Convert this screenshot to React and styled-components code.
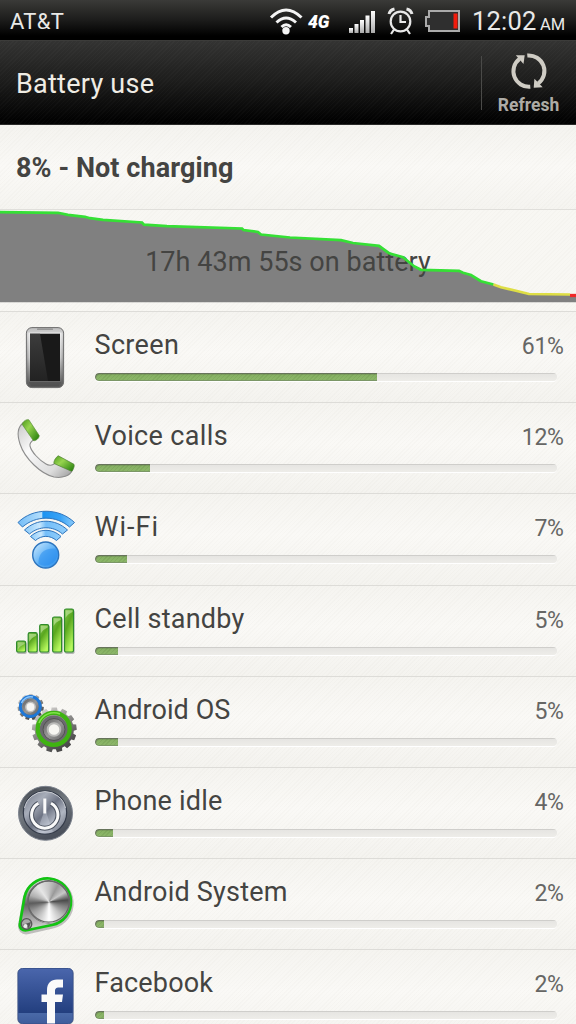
import React from 'react';
import styled, { createGlobalStyle } from 'styled-components';

const Global = createGlobalStyle`
  * { box-sizing: border-box; }
  html, body { margin: 0; padding: 0; background: #f6f5f1; overflow: hidden; }
  body { font-family: Roboto, "Liberation Sans", sans-serif; }
`;

const Screen = styled.main`
  width: 576px;
  height: 1024px;
  overflow: hidden;
  display: flex;
  flex-direction: column;
  background: #f7f6f2;
  color: #444442;
`;

const StatusBar = styled.div`
  flex: none;
  height: 40px;
  display: flex;
  align-items: center;
  padding: 2px 10px 0;
  background: linear-gradient(#3a3a38, #1c1c1b 50%, #000 90%);
  color: #e9e9e7;
`;

const Carrier = styled.span`
  flex: 1;
  padding-top: 2px;
  font-size: 22px;
  line-height: 36px;
  letter-spacing: 0.3px;
`;

const StatusIcons = styled.svg`
  display: block;
  width: 196px;
  height: 38px;
`;

const Clock = styled.span`
  width: 94px;
  margin-left: 8px;
  padding-top: 3px;
  font-size: 25.5px;
  line-height: 35px;
  letter-spacing: 0.2px;
  white-space: nowrap;
`;

const Meridiem = styled.small`
  font-size: 16.5px;
  margin-left: 3.5px;
  letter-spacing: 0;
`;

const TitleBar = styled.header`
  flex: none;
  height: 85px;
  display: flex;
  align-items: center;
  border-top: 1px solid #3c3c3a;
  border-bottom: 1px solid #2a2a29;
  background:
    repeating-linear-gradient(135deg, rgba(255,255,255,0.02) 0 1px, transparent 1px 3px),
    linear-gradient(#333332, #1d1d1c 48%, #020202 95%);
`;

const Title = styled.h1`
  flex: 1;
  margin: 0;
  padding: 2px 0 0 16px;
  font-size: 27px;
  font-weight: 400;
  letter-spacing: 0.25px;
  color: #efece4;
`;

const Divider = styled.div`
  width: 1px;
  height: 54px;
  background: #4a4a48;
`;

const RefreshButton = styled.button`
  width: 94px;
  height: 83px;
  padding: 10px 1px 0 0;
  border: 0;
  background: none;
  display: flex;
  flex-direction: column;
  align-items: center;
  font: 700 17.5px Roboto, sans-serif;
  color: #aeaca6;
  span { line-height: 20px; margin-top: 4px; }
  svg { flex: none; display: block; width: 44px; height: 40px; }
`;

const stripes = 'repeating-linear-gradient(135deg, rgba(120,115,95,0.025) 0 1px, transparent 1px 3px)';

const ChargeState = styled.section`
  flex: none;
  height: 84px;
  padding: 2px 16px 0;
  display: flex;
  align-items: center;
  font-size: 27px;
  font-weight: 700;
  letter-spacing: 0.08px;
  background: ${stripes}, linear-gradient(#f4f3ef, #faf9f6 50%, #f5f4f0);
`;

const History = styled.section`
  flex: none;
  height: 102px;
  display: grid;
  border-top: 1px solid #e0dfdb;
  background: ${stripes}, #f8f7f3;
  > * { grid-area: 1 / 1; }
  svg { display: block; }
`;

const HistoryLabel = styled.div`
  padding-top: 36px;
  text-align: center;
  font-size: 27px;
  line-height: 32px;
  letter-spacing: 0.05px;
`;

const List = styled.ul`
  flex: none;
  list-style: none;
  margin: 0;
  padding: 0;
`;

const Row = styled.li`
  height: 91.2px;
  display: flex;
  border-top: 1px solid #dddcd8;
  background: ${stripes}, linear-gradient(#f5f4f0, #faf9f6 45%, #f4f3ef);
`;

const RowIcon = styled.svg`
  flex: none;
  display: block;
  width: 95px;
  height: 90px;
`;

const RowBody = styled.div`
  flex: 1;
  padding-top: 17px;
`;

const RowText = styled.div`
  display: flex;
  align-items: baseline;
  justify-content: space-between;
  height: 44px;
  padding-right: 12.5px;
  line-height: 32px;
`;

const Name = styled.span`
  margin-left: -0.5px;
  font-size: 27px;
  letter-spacing: ${(p) => p.$spacing}px;
`;

const Percent = styled.span`
  font-size: 23px;
  letter-spacing: -0.35px;
  color: #666664;
`;

const Track = styled.div`
  width: 462px;
  height: 8px;
  border-radius: 4px;
  overflow: hidden;
  background: linear-gradient(#cfcecb 0 1px, #e6e5e2 1px, #eeede9);
  box-shadow: 0 1px 0 #fff;
`;

const Fill = styled.div`
  width: ${(p) => p.$value}%;
  height: 8px;
  border-radius: 4px 0 0 4px;
  background:
    repeating-linear-gradient(135deg, rgba(50,90,25,0.1) 0 1px, transparent 1px 3px),
    linear-gradient(#6f9052, #86b063 30%, #8fba6c);
  box-shadow: inset 1px 1px 1px #66705d, inset 0 -1px 1px #7b9468;
`;

const gearPath = (cx, cy, inner, outer, teeth) => {
  const pts = [];
  for (let i = 0; i < teeth; i += 1) {
    [[-0.34, inner], [-0.25, outer], [0.25, outer], [0.34, inner]].forEach(([o, r]) => {
      const a = ((i + o) / teeth) * Math.PI * 2;
      pts.push(`${(cx + Math.sin(a) * r).toFixed(2)},${(cy - Math.cos(a) * r).toFixed(2)}`);
    });
  }
  return `M${pts.join('L')}Z`;
};

const PhoneIcon = () => (
  <RowIcon viewBox="0 0 95 90">
    <defs>
      <linearGradient id="ph" x2="0" y2="1"><stop stopColor="#bcbcbc" /><stop offset=".12" stopColor="#d8d8d8" /><stop offset=".5" stopColor="#aaa" /><stop offset=".88" stopColor="#666" /><stop offset="1" stopColor="#555" /></linearGradient>
      <linearGradient id="phe" x2="0" y2="1"><stop stopColor="#eee" /><stop offset=".5" stopColor="#ccc" /><stop offset="1" stopColor="#666" /></linearGradient>
      <linearGradient id="phg" x2="0" y2="1"><stop stopColor="#3c3c3c" /><stop offset="1" stopColor="#222" /></linearGradient>
    </defs>
    <rect x="26.4" y="15.6" width="37.2" height="60" rx="5.5" fill="url(#ph)" stroke="#6d6d6d" />
    <rect x="37" y="16.5" width="16" height="1.3" rx=".6" fill="#8a8a8a" />
    <rect x="28.5" y="20.6" width="33" height="49.4" fill="url(#phe)" />
    <rect x="30" y="21.7" width="30" height="47.3" fill="#191919" />
    <path d="M30 21.7H40L48 69H30Z" fill="url(#phg)" />
    <path d="M29 70H61L59 74H31Z" fill="#444" opacity=".45" />
  </RowIcon>
);

const HandsetIcon = () => (
  <RowIcon viewBox="0 0 95 90">
    <defs>
      <linearGradient id="hs" x1="0" x2="1" y2="1"><stop stopColor="#c9c9c9" /><stop offset=".35" stopColor="#fafafa" /><stop offset=".75" stopColor="#dcdcdc" /><stop offset="1" stopColor="#9a9a9a" /></linearGradient>
      <linearGradient id="hg" x1="0" x2="1" y2=".9"><stop stopColor="#4d9a1c" /><stop offset=".4" stopColor="#97d44f" /><stop offset="1" stopColor="#27800c" /></linearGradient>
    </defs>
    <path d="M23 20C18 24 17 32 20 41C25 56 41 71 54 74C62 75.500 70 73 72.500 67L55 60C53 62.500 49 63 46 61C39 57 31.500 49 30 43C29.300 40 31 38.500 34 36.500Z" fill="url(#hs)" stroke="#8d8d8d" strokeWidth="1.1" />
    <path d="M22.300 21.500C22.300 19 26 16 28.800 16.800L39.200 32.500C39.500 35 35.500 38.300 33.300 37.600Z" fill="url(#hg)" stroke="#5a8f3a" strokeWidth=".7" />
    <path d="M58.300 52.800C56 54 53.300 58.500 54 60.500L71.500 68.300C73 67.500 74.800 63.500 74 61.300Z" fill="url(#hg)" stroke="#4d7f33" strokeWidth=".7" />
  </RowIcon>
);

const WifiIcon = () => (
  <RowIcon viewBox="0 0 95 90">
    <defs>
      <linearGradient id="wf" x2="1"><stop stopColor="#74bdf7" /><stop offset=".42" stopColor="#b4defc" /><stop offset=".44" stopColor="#1c93f2" /><stop offset=".75" stopColor="#37a2f6" /><stop offset="1" stopColor="#8fcdfb" /></linearGradient>
      <linearGradient id="wg" x2="1"><stop stopColor="#8ccbfa" /><stop offset=".35" stopColor="#c8e7fd" /><stop offset=".5" stopColor="#74bef9" /><stop offset="1" stopColor="#8fcdfb" /></linearGradient>
      <linearGradient id="wb" x1="0" x2="1" y2="1"><stop stopColor="#d6eefe" /><stop offset=".5" stopColor="#63b4f7" /><stop offset="1" stopColor="#2a8cea" /></linearGradient>
    </defs>
    <g stroke="#2d74bd" strokeWidth="1" strokeLinejoin="round">
      <path d="M18 28.500C33 13.500 59 13.500 74.500 28.500L69.500 33C56 21.200 36 21.200 22.500 33Z" fill="url(#wf)" />
      <path d="M24.500 36C37 24.300 55 24.300 67.500 36L62.500 40C53 31.700 39 31.700 29.500 40Z" fill="url(#wg)" />
      <path d="M30.500 42.500C39.500 34.300 52.500 34.300 61 42.500L56.500 46.500C50 41 41.500 41 35.500 46.500Z" fill="url(#wg)" />
      <circle cx="45.700" cy="61" r="13" fill="url(#wb)" strokeWidth="1.400" />
    </g>
    <path d="M38.500 70C38 59 44 53.500 57 54.500A13 13 0 0 1 38.500 70Z" fill="#2389ee" opacity=".5" />
  </RowIcon>
);

const CellIcon = () => (
  <RowIcon viewBox="0 0 95 90">
    <defs>
      <linearGradient id="ce" x1="0" x2=".5" y2="1"><stop stopColor="#7fc24a" /><stop offset=".45" stopColor="#5aa71f" /><stop offset="1" stopColor="#b6f85d" /></linearGradient>
    </defs>
    {[[16.6, 55], [28.2, 46.700], [39.700, 38.500], [52.600, 31], [64.500, 23]].map(([x, y]) => (
      <g key={x}>
        <rect x={x + 0.5} y={y + 1} width="9.600" height={67 - y} rx="1.800" fill="#777" opacity=".5" />
        <rect x={x} y={y} width="9" height={66 - y} rx="1.600" fill="url(#ce)" stroke="#2f8a2c" strokeWidth="1.200" />
        <path d={`M${x + 1} ${y + 1.200}H${x + 8}V${y + 3}Q${x + 3} ${y + 5} ${x + 1} ${y + 9}Z`} fill="#d9f3bd" opacity=".5" />
      </g>
    ))}
  </RowIcon>
);

const GearsIcon = () => (
  <RowIcon viewBox="0 0 95 90">
    <defs>
      <linearGradient id="gr" x1=".2" x2=".75" y2="1"><stop stopColor="#dddbd9" /><stop offset=".35" stopColor="#999896" /><stop offset=".8" stopColor="#555" /><stop offset="1" stopColor="#404040" /></linearGradient>
      <linearGradient id="gc" x2="1" y2="1"><stop stopColor="#5c5c5c" /><stop offset=".5" stopColor="#999" /><stop offset="1" stopColor="#606060" /></linearGradient>
    </defs>
    <path d={gearPath(30.700, 30, 11, 13.200, 11)} fill="url(#gr)" />
    <circle cx="30.500" cy="29.800" r="8.300" fill="url(#gc)" />
    <circle cx="30.300" cy="29.500" r="10" fill="none" stroke="#1e78d8" strokeWidth="2.900" />
    <path d="M21.500 26A10 10 0 0 1 33 20" fill="none" stroke="#8cc6fb" strokeWidth="1.500" />
    <circle cx="30.500" cy="30" r="4.700" fill="#f7f6f2" stroke="#c1c1bf" strokeWidth="1.500" />
    <path d={gearPath(54.300, 52.800, 19.500, 22.500, 13)} fill="url(#gr)" />
    <circle cx="53.700" cy="52.600" r="14" fill="#6c6a70" />
    <circle cx="53.700" cy="51.800" r="16" fill="none" stroke="#3fb312" strokeWidth="4.300" />
    <path d="M39 46A16 16 0 0 1 60 37" fill="none" stroke="#82e34d" strokeWidth="1.500" />
    <circle cx="54" cy="52.500" r="11" fill="url(#gc)" stroke="#525252" />
    <circle cx="54" cy="52.500" r="6.300" fill="#f7f6f2" stroke="#bbbbb9" strokeWidth="2" />
  </RowIcon>
);

const PowerIcon = () => (
  <RowIcon viewBox="0 0 95 90">
    <defs>
      <linearGradient id="po" x2=".4" y2="1"><stop stopColor="#3f444b" /><stop offset=".5" stopColor="#72787f" /><stop offset="1" stopColor="#4b515c" /></linearGradient>
      <linearGradient id="pi" x2="1" y2="1"><stop stopColor="#6e7482" /><stop offset=".3" stopColor="#a7adb9" /><stop offset=".5" stopColor="#6e7484" /><stop offset=".7" stopColor="#b1b7c3" /><stop offset="1" stopColor="#5c6270" /></linearGradient>
    </defs>
    <circle cx="45.500" cy="45.300" r="27" fill="url(#po)" stroke="#7d838e" strokeWidth="1" />
    <circle cx="45" cy="44.500" r="21.700" fill="url(#pi)" stroke="#343b49" strokeWidth="1.200" />
    <path d="M24.500 40A21 21 0 0 1 65.500 40" fill="none" stroke="#c8cbd1" strokeWidth="1" />
    <path d="M45 41L37 64A21 21 0 0 0 53 64Z" fill="#d5dae4" opacity=".35" />
    <path d="M38.500 35.300A13.200 13.200 0 1 0 51 35.300" fill="none" stroke="#4c5360" strokeWidth="5" />
    <path d="M38.500 35.300A13.200 13.200 0 1 0 51 35.300M44.800 30.500V45.500" fill="none" stroke="#fafafa" strokeWidth="3" />
  </RowIcon>
);

const Metal = styled.div`
  width: 42px;
  height: 42px;
  border-radius: 50%;
  background: conic-gradient(#c5c5c5, #999 28deg, #c8c8c8 58deg, #4c4c4c 84deg, #808080 105deg, #c4c4c4 140deg, #fff 180deg, #d4d4d4 205deg, #999 240deg, #5c5c5c 266deg, #b0b0b0 290deg, #e6e6e6 325deg, #c5c5c5);
`;

const PulleyIcon = () => (
  <RowIcon viewBox="0 0 95 90">
    <defs>
      <linearGradient id="pb" x2="0" y2="1"><stop stopColor="#e9e9e9" /><stop offset=".5" stopColor="#666" /><stop offset="1" stopColor="#ddd" /></linearGradient>
    </defs>
    <path d="M20 64L24.500 38A23.500 23.500 0 1 1 52 66L28 71.500C22 73 19 69 20 64Z" fill="none" stroke="#888" strokeWidth="4.500" opacity=".5" transform="translate(.5 1.300)" />
    <path d="M20 64L24.500 38A23.500 23.500 0 1 1 52 66L28 71C22 72.500 19 69 20 64Z" fill="url(#pb)" stroke="#12c412" strokeWidth="2.700" />
    <circle cx="48.700" cy="42.700" r="21.700" fill="#6a6a6a" />
    <foreignObject x="27.700" y="21.700" width="42" height="42"><Metal /></foreignObject>
    <circle cx="48.700" cy="42.700" r="20.500" fill="none" stroke="#666" strokeWidth="1.200" />
    <circle cx="26.500" cy="65" r="5.300" fill="#aaa" stroke="#555" strokeWidth="1.300" />
    <path d="M22 66L31 63L29 69Z" fill="#555" />
    <circle cx="25.500" cy="67" r="2" fill="#eee" />
  </RowIcon>
);

const FacebookIcon = () => (
  <RowIcon viewBox="0 -.5 95 90">
    <defs>
      <linearGradient id="fb" x2="0" y2="1"><stop stopColor="#4a66ac" /><stop offset=".8" stopColor="#233f7f" /><stop offset=".805" stopColor="#4a6aa8" /><stop offset="1" stopColor="#3f5d9c" /></linearGradient>
    </defs>
    <rect x="17.500" y="18" width="56" height="56" rx="5" fill="#777" opacity=".6" />
    <rect x="18" y="18" width="55" height="55" rx="4.500" fill="url(#fb)" stroke="#3a5490" />
    <path d="M47 73V51.500H41.500V44H47V40C47 32.500 51 29 57 29H63V37H59C56 37 55 38 55 41V44H63L62 51.500H55V73Z" fill="#fafafa" />
  </RowIcon>
);

const RefreshIcon = () => (
  <svg viewBox="506 51 44 40" fill="none">
    <g stroke="#cfccc4" strokeWidth="4">
      <path d="M529.300 86.800A15.600 15.600 0 0 1 518.500 58.900" />
      <path d="M526.300 55.500A15.600 15.600 0 0 1 537.200 83.500" />
    </g>
    <path d="M514.800 55.200L523.700 55.200L522.500 64Z" fill="#cfccc4" />
    <path d="M541.700 87.200L532.700 87.700L533.400 78.700Z" fill="#cfccc4" />
  </svg>
);

const line = [
  [0, 2.6], [58, 3.3], [68, 5.3], [85, 7.3], [90, 8.7], [103, 10.3], [142, 13], [144, 15.2], [167, 16.6],
  [242, 19], [243.500, 20.500], [258, 22.500], [261, 25], [290, 28], [341, 30.700], [353, 33.500], [379, 36.300],
  [389, 43.700], [403, 47.700], [414, 56.700], [421, 60.300], [459, 61.300], [463, 63.300], [471, 65.500],
  [481, 71.700], [493.500, 75], [501, 77.700], [516, 81.300], [529, 84.500], [570, 85], [576, 86],
];
const path = (pts) => pts.map((p) => p.join(',')).join(' ');

const HistoryArea = () => (
  <svg width="576" height="101" viewBox="0 0.5 576 101">
    <polygon points={`0,92.8 ${path(line)} 576,92.8`} fill="#808080" />
  </svg>
);

const HistoryLine = () => (
  <svg width="576" height="101" viewBox="0 0.5 576 101" fill="none" strokeWidth="2.700">
    <polyline points={path(line.slice(0, 26))} stroke="#35e035" />
    <polyline points={path(line.slice(25, 30))} stroke="#dede45" />
    <path d="M570 86H576" stroke="#f02828" strokeWidth="3.300" />
  </svg>
);

const items = [
  { name: 'Screen', value: 61, spacing: 0.35, Icon: PhoneIcon },
  { name: 'Voice calls', value: 12, spacing: 0.35, Icon: HandsetIcon },
  { name: 'Wi-Fi', value: 7, spacing: 1, Icon: WifiIcon },
  { name: 'Cell standby', value: 5, spacing: 0.25, Icon: CellIcon },
  { name: 'Android OS', value: 5, spacing: 0.08, Icon: GearsIcon },
  { name: 'Phone idle', value: 4, spacing: 0.22, Icon: PowerIcon },
  { name: 'Android System', value: 2, spacing: 0.22, Icon: PulleyIcon },
  { name: 'Facebook', value: 2, spacing: 0.18, Icon: FacebookIcon },
];

const StatusGlyphs = () => (
  <StatusIcons viewBox="268 2 196 38" fill="none">
    <defs>
      <linearGradient id="sg" x2="0" y2="1"><stop stopColor="#fff" /><stop offset="1" stopColor="#aaa" /></linearGradient>
    </defs>
    <g stroke="#f4f4f4" strokeWidth="3">
      <path d="M271 17.500Q286 2.500 301.500 17.500" />
      <path d="M276.500 22.500Q286 13.500 296 22.500" />
      <path d="M281.500 27Q286 22.500 291 27" />
    </g>
    <circle cx="286" cy="30.700" r="3.700" fill="#f4f4f4" />
    <text x="308" y="27.700" fontFamily="Roboto, sans-serif" fontSize="19" fontWeight="900" fontStyle="italic" fill="#fff" textLength="21.500" lengthAdjust="spacingAndGlyphs">4G</text>
    {[[349, 28], [354.500, 24], [360, 20], [365.500, 15.500], [371, 11]].map(([x, y]) => (
      <rect key={x} x={x} y={y} width="4" height={33 - y} fill="url(#sg)" />
    ))}
    <g stroke="#e8e8e8" strokeWidth="2.200">
      <circle cx="400.500" cy="21.500" r="9.800" />
      <path d="M400.500 15V22H406M394 29.500L391 34M407 29.500L410 34" />
      <path d="M389 14Q390 10 394.500 9M412 14Q411 10 406.500 9" strokeWidth="3" />
    </g>
    <path d="M429 11H459V31H429V26H426V17H429Z" fill="#2f2f2f" stroke="#aaa" strokeWidth="2" />
    <rect x="453.500" y="13.500" width="4" height="15" fill="#f21c0d" />
  </StatusIcons>
);

export default function App() {
  return (
    <>
      <Global />
      <Screen>
        <StatusBar>
          <Carrier>AT&amp;T</Carrier>
          <StatusGlyphs />
          <Clock>12:02<Meridiem>AM</Meridiem></Clock>
        </StatusBar>
        <TitleBar>
          <Title>Battery use</Title>
          <Divider />
          <RefreshButton type="button">
            <RefreshIcon />
            <span>Refresh</span>
          </RefreshButton>
        </TitleBar>
        <ChargeState>8% - Not charging</ChargeState>
        <History>
          <HistoryArea />
          <HistoryLabel>17h 43m 55s on battery</HistoryLabel>
          <HistoryLine />
        </History>
        <List>
          {items.map(({ name, value, spacing, Icon }) => (
            <Row key={name}>
              <Icon />
              <RowBody>
                <RowText>
                  <Name $spacing={spacing}>{name}</Name>
                  <Percent>{value}%</Percent>
                </RowText>
                <Track><Fill $value={value} /></Track>
              </RowBody>
            </Row>
          ))}
        </List>
      </Screen>
    </>
  );
}
